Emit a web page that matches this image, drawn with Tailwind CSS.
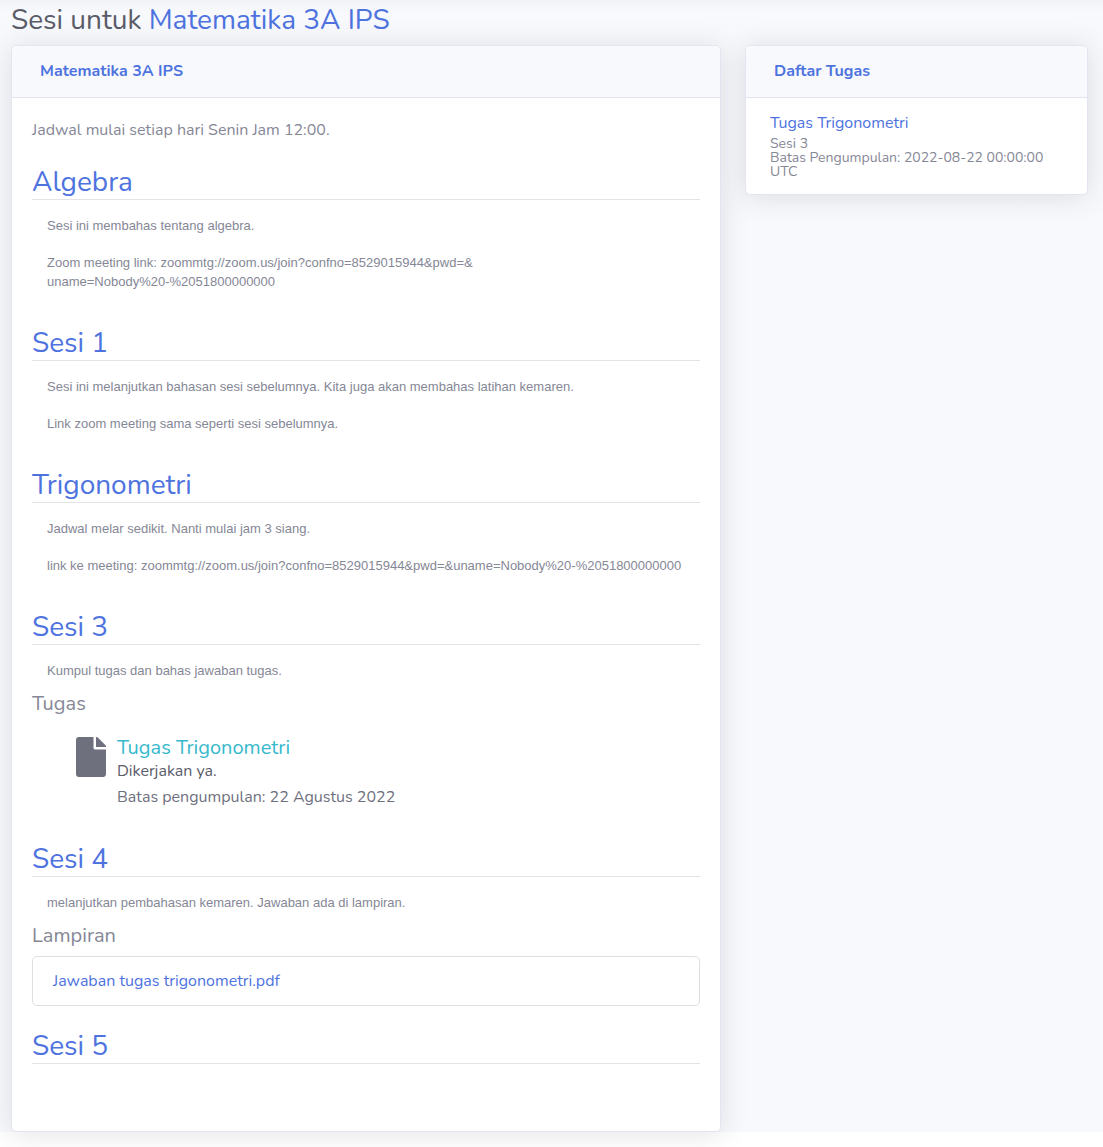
<!DOCTYPE html>
<html lang="id">
<head>
<meta charset="utf-8">
<meta name="viewport" content="width=device-width, initial-scale=1">
<title>Sesi untuk Matematika 3A IPS</title>
<script src="https://cdn.jsdelivr.net/npm/@tailwindcss/browser@4"></script>
</head>
<body class="min-h-screen bg-white font-['Nunito','Roboto',sans-serif] text-base text-[#858796]">
<div class="bg-[#f8f9fc] bg-linear-to-b from-[#f2f3f6] to-[#f8f9fc] to-[12px] pl-[11px] pr-[15px] pt-[3px]">
  <h1 class="mb-2 text-[28px] leading-[34px] text-[#5a5c69]">Sesi untuk <a href="#" class="text-[#4e73df]">Matematika 3A IPS</a></h1>

  <div class="grid grid-cols-3 items-start gap-6">
    <main class="col-span-2 rounded-[5px] border border-[#e3e6f0] bg-white shadow-[0_2px_28px_0_rgba(58,59,69,0.15)]">
      <header class="rounded-t-[4px] border-b border-[#e3e6f0] bg-[#f8f9fc] px-7 pt-[13px] pb-[14px]">
        <h2 class="font-bold leading-6 text-[#4e73df]">Matematika 3A IPS</h2>
      </header>
      <div class="px-5 pt-5 pb-[67px]">
        <p class="mb-6 leading-6">Jadwal mulai setiap hari Senin Jam 12:00.</p>

        <section class="mb-9">
          <h3 class="border-b border-[#e3e3e6] text-[28px] leading-[33px] text-[#4e73df]">Algebra</h3>
          <div class="flex flex-col gap-[18px] px-[15px] pt-4 font-['Liberation_Sans',Arial,sans-serif] text-[13px] leading-[19px]">
            <p>Sesi ini membahas tentang algebra.</p>
            <p>Zoom meeting link: zoommtg://zoom.us/join?confno=8529015944&amp;pwd=&amp;<wbr><span class="whitespace-nowrap">uname=Nobody%20-%2051800000000</span></p>
          </div>
        </section>

        <section class="mb-9">
          <h3 class="border-b border-[#e3e3e6] text-[28px] leading-[33px] text-[#4e73df]">Sesi 1</h3>
          <div class="flex flex-col gap-[18px] px-[15px] pt-4 font-['Liberation_Sans',Arial,sans-serif] text-[13px] leading-[19px]">
            <p>Sesi ini melanjutkan bahasan sesi sebelumnya. Kita juga akan membahas latihan kemaren.</p>
            <p>Link zoom meeting sama seperti sesi sebelumnya.</p>
          </div>
        </section>

        <section class="mb-9">
          <h3 class="border-b border-[#e3e3e6] text-[28px] leading-[33px] text-[#4e73df]">Trigonometri</h3>
          <div class="flex flex-col gap-[18px] px-[15px] pt-4 font-['Liberation_Sans',Arial,sans-serif] text-[13px] leading-[19px]">
            <p>Jadwal melar sedikit. Nanti mulai jam 3 siang.</p>
            <p>link ke meeting: zoommtg://zoom.us/join?confno=8529015944&amp;pwd=&amp;<wbr><span class="whitespace-nowrap">uname=Nobody%20-%2051800000000</span></p>
          </div>
        </section>

        <section class="mb-[34px]">
          <h3 class="border-b border-[#e3e3e6] text-[28px] leading-[33px] text-[#4e73df]">Sesi 3</h3>
          <p class="px-[15px] pt-4 font-['Liberation_Sans',Arial,sans-serif] text-[13px] leading-[19px]">Kumpul tugas dan bahas jawaban tugas.</p>
          <h4 class="mt-3 text-xl leading-6">Tugas</h4>
          <div class="mt-5 flex gap-[11px] pl-11">
            <svg class="mt-px h-10 w-[30px] shrink-0 text-[#6e707e]" viewBox="0 0 384 512" fill="currentColor" aria-hidden="true"><path d="M224 136V0H36C16 0 0 16 0 36v440c0 20 16 36 36 36h312c20 0 36-16 36-36V160H248c-13.200 0-24-10.800-24-24zm160-14.100v6.100H256V0h6.100c6.400 0 12.500 2.500 17 7l97.900 98c4.500 4.500 7 10.600 7 16.900z"/></svg>
            <div>
              <h5 class="text-xl leading-6"><a href="#" class="text-[#36b9cc]">Tugas Trigonometri</a></h5>
              <p class="leading-[22px] text-[#5a5c69]">Dikerjakan ya.</p>
              <p class="mt-[3px] leading-6 text-[#6e707e]">Batas pengumpulan: 22 Agustus 2022</p>
            </div>
          </div>
        </section>

        <section class="mb-6">
          <h3 class="border-b border-[#e3e3e6] text-[28px] leading-[33px] text-[#4e73df]">Sesi 4</h3>
          <p class="px-[15px] pt-4 font-['Liberation_Sans',Arial,sans-serif] text-[13px] leading-[19px]">melanjutkan pembahasan kemaren. Jawaban ada di lampiran.</p>
          <h4 class="mt-3 mb-2 text-xl leading-6">Lampiran</h4>
          <ul class="rounded-[5px] border border-[#dddfe0]">
            <li class="px-5 py-3 leading-6"><a href="#" class="text-[#4e73df]">Jawaban tugas trigonometri.pdf</a></li>
          </ul>
        </section>

        <section>
          <h3 class="border-b border-[#e3e3e6] text-[28px] leading-[33px] text-[#4e73df]">Sesi 5</h3>
        </section>
      </div>
    </main>

    <aside class="rounded-[5px] border border-[#e3e6f0] bg-white shadow-[0_2px_28px_0_rgba(58,59,69,0.15)]">
      <header class="rounded-t-[4px] border-b border-[#e3e6f0] bg-[#f8f9fc] px-7 pt-[13px] pb-[14px]">
        <h2 class="font-bold leading-6 text-[#4e73df]">Daftar Tugas</h2>
      </header>
      <div class="pt-[13px] pr-10 pb-[15px] pl-6">
        <a href="#" class="block leading-6 text-[#4e73df]">Tugas Trigonometri</a>
        <p class="mt-[2px] text-sm leading-[14px]">Sesi 3<br>Batas Pengumpulan: 2022-08-22 00:00:00 UTC</p>
      </div>
    </aside>
  </div>
</div>
</body>
</html>
